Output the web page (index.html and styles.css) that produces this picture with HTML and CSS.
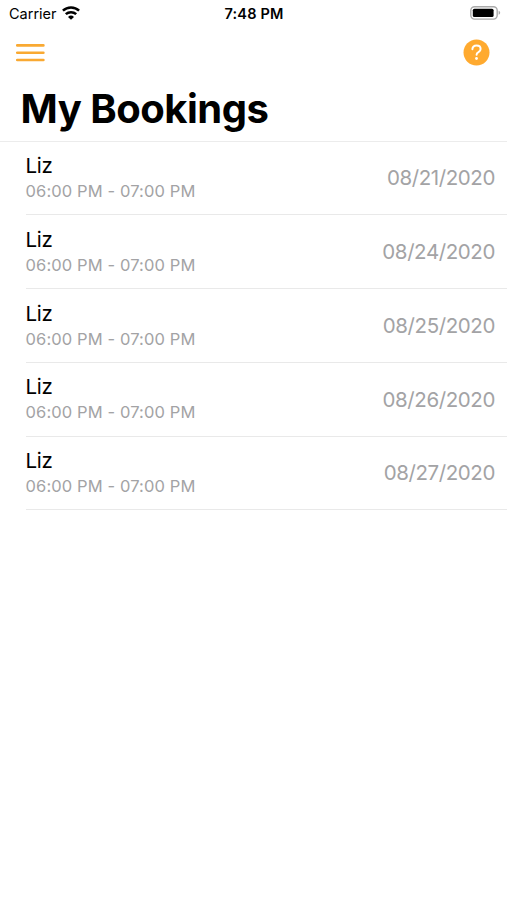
FILE: index.html
```html
<!DOCTYPE html>
<html lang="en">
<head>
<meta charset="utf-8">
<title>My Bookings</title>
<link rel="stylesheet" href="styles.css">
</head>
<body>
<div class="status">
  <div class="carrier"><span class="carrier-name">Carrier</span>
    <svg class="wifi" width="18" height="14" viewBox="0 0 18 14"><g fill="none" stroke="#000" stroke-width="2.5"><path d="M.9 4.7a11.8 11.8 0 0 1 16.2 0"/><path d="M3.8 8.2a7.6 7.6 0 0 1 10.4 0"/></g><path d="M9 13.8 6 10.9a4.3 4.3 0 0 1 6 0z"/></svg>
  </div>
  <span class="clock">7:48 PM</span>
  <svg class="battery" width="31" height="14" viewBox="0 0 31 14"><rect x=".8" y=".7" width="26.4" height="12.4" rx="3.8" fill="none" stroke="#aaa" stroke-width="1.4"/><rect x="2.8" y="2.7" width="20.8" height="8.4" rx="1.6"/><path d="M28.6 4.8q1.6.6 1.6 2t-1.6 2z" fill="#aaa"/></svg>
</div>
<nav class="nav">
  <svg width="29" height="19" viewBox="0 0 29 19"><path d="M1.2 2.4h26.2M1.2 9.7h26.2M1.2 17h26.2" stroke="#f9a932" stroke-width="2.6" stroke-linecap="round"/></svg>
  <svg width="27" height="27" viewBox="0 0 27 27"><circle cx="13.5" cy="13.5" r="13" fill="#ffaa2f"/><path d="M9.4 10.2c.2-2.3 1.8-3.6 4.1-3.6 2.4 0 4.1 1.3 4.1 3.3 0 1.6-.8 2.4-2.1 3.2-1.4.8-1.9 1.4-1.9 2.7" fill="none" stroke="#fff" stroke-width="2" stroke-linecap="round"/><circle cx="13.5" cy="19.5" r="1.4" fill="#fff"/></svg>
</nav>
<h1 class="title">My Bookings</h1>
<ul class="list">
  <li class="row"><div class="info"><div class="name">Liz</div><div class="time">06:00 PM - 07:00 PM</div></div><span class="date">08/21/2020</span></li>
  <li class="row"><div class="info"><div class="name">Liz</div><div class="time">06:00 PM - 07:00 PM</div></div><span class="date">08/24/2020</span></li>
  <li class="row"><div class="info"><div class="name">Liz</div><div class="time">06:00 PM - 07:00 PM</div></div><span class="date">08/25/2020</span></li>
  <li class="row"><div class="info"><div class="name">Liz</div><div class="time">06:00 PM - 07:00 PM</div></div><span class="date">08/26/2020</span></li>
  <li class="row"><div class="info"><div class="name">Liz</div><div class="time">06:00 PM - 07:00 PM</div></div><span class="date">08/27/2020</span></li>
</ul>
</body>
</html>
```
FILE: styles.css
```css
* { box-sizing: border-box; }
body { margin: 0; background: #fff; color: #000; font-family: Inter, sans-serif; }
svg { display: block; }
.status { height: 27px; padding: 0 6px 0 9px; display: grid; grid-template-columns: 1fr auto 1fr; align-items: center; font-size: 14.5px; }
.carrier { display: flex; align-items: center; gap: 5px; }
.wifi { margin-top: -1px; }
.clock { font-weight: 600; letter-spacing: 0.2px; margin-right: 2px; }
.battery { justify-self: end; margin-top: -1px; }
.nav { height: 51px; padding: 0 17px 0 16px; display: flex; justify-content: space-between; align-items: center; }
.title { margin: 0; height: 63.6px; padding-left: 20.5px; line-height: 61px; font-size: 40px; font-weight: 700; letter-spacing: -0.5px; border-bottom: 1px solid #ececec; white-space: nowrap; }
.list { margin: 0; padding: 0 0 0 25.5px; list-style: none; }
.row { height: 73.75px; padding: 0 12px 0 0; display: flex; justify-content: space-between; align-items: center; border-bottom: 1px solid #e9e9e9; }
.info { padding-top: 1.2px; }
.name { font-size: 20.5px; line-height: 26px; letter-spacing: -0.3px; }
.time { font-size: 16.5px; line-height: 25px; letter-spacing: 0.12px; color: #a3a3a5; }
.date { font-size: 20.5px; letter-spacing: -0.4px; color: #a3a3a5; }
```
